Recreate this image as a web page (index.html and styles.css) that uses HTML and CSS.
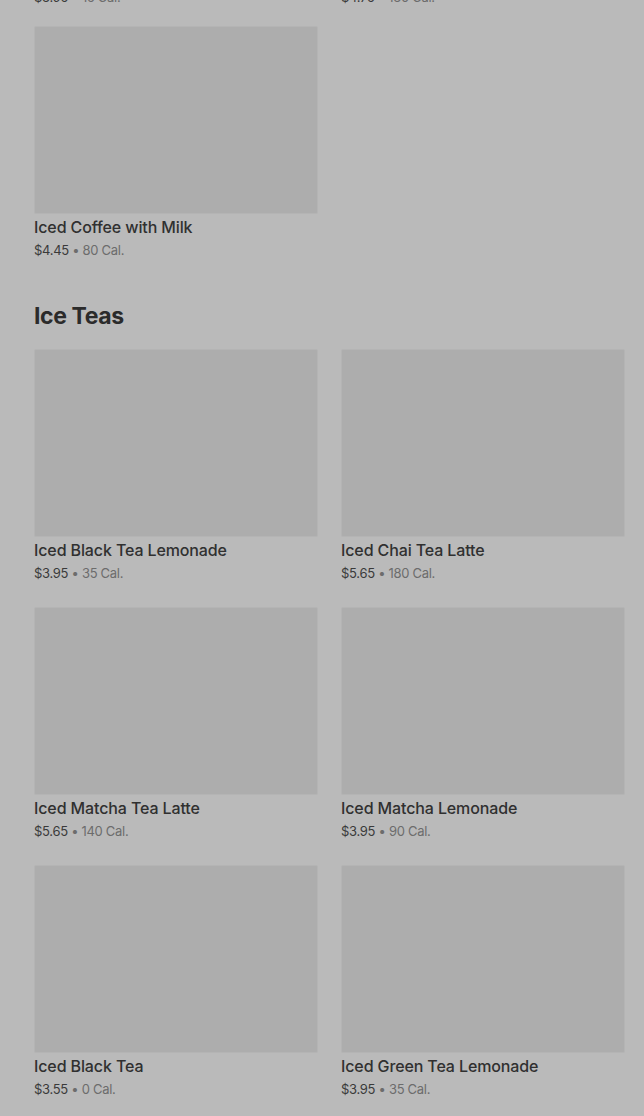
FILE: index.html
```html
<!DOCTYPE html>
<html>
<head>
  <title>Menu</title>
  <link rel="stylesheet" href="styles.css">
</head>
<body>
  <div class="menu">
    <section class="section section-first">
      <div class="grid">
        <div class="item">
          <div class="thumb"></div>
          <div class="name">Iced Caffè Americano</div>
          <div class="meta"><span class="price">$3.95</span> • 15 Cal.</div>
        </div>
        <div class="item">
          <div class="thumb"></div>
          <div class="name">Iced Caffè Latte</div>
          <div class="meta"><span class="price">$4.75</span> • 130 Cal.</div>
        </div>
        <div class="item">
          <div class="thumb"></div>
          <div class="name">Iced Coffee with Milk</div>
          <div class="meta"><span class="price">$4.45</span> • 80 Cal.</div>
        </div>
      </div>
    </section>

    <section class="section">
      <h2 class="section-title">Ice Teas</h2>
      <div class="grid">
        <div class="item">
          <div class="thumb"></div>
          <div class="name">Iced Black Tea Lemonade</div>
          <div class="meta"><span class="price">$3.95</span> • 35 Cal.</div>
        </div>
        <div class="item">
          <div class="thumb"></div>
          <div class="name">Iced Chai Tea Latte</div>
          <div class="meta"><span class="price">$5.65</span> • 180 Cal.</div>
        </div>
        <div class="item">
          <div class="thumb"></div>
          <div class="name">Iced Matcha Tea Latte</div>
          <div class="meta"><span class="price">$5.65</span> • 140 Cal.</div>
        </div>
        <div class="item">
          <div class="thumb"></div>
          <div class="name">Iced Matcha Lemonade</div>
          <div class="meta"><span class="price">$3.95</span> • 90 Cal.</div>
        </div>
        <div class="item">
          <div class="thumb"></div>
          <div class="name">Iced Black Tea</div>
          <div class="meta"><span class="price">$3.55</span> • 0 Cal.</div>
        </div>
        <div class="item">
          <div class="thumb"></div>
          <div class="name">Iced Green Tea Lemonade</div>
          <div class="meta"><span class="price">$3.95</span> • 35 Cal.</div>
        </div>
      </div>
    </section>
  </div>
</body>
</html>
```

FILE: styles.css
```css
html, body {
  margin: 0;
  background: #bababa;
  font-family: Inter, "Noto Sans", sans-serif;
}

/* page is scrolled: the previous row sits above the top edge */
.menu {
  margin-top: -227px;
  padding: 0 20px 0 34px;
}

.section + .section { margin-top: 43px; }
.section-first .grid { row-gap: 20px; }

.section-title {
  margin: 0 0 19px;
  font-size: 23px;
  line-height: 28px;
  font-weight: 700;
  letter-spacing: -0.4px;
  color: #2b2b2b;
}

.grid {
  display: grid;
  grid-template-columns: 284px 284px;
  column-gap: 23px;
  row-gap: 25px;
}

.thumb {
  height: 186px;
  background: #adadad;
  border: 1px solid #b4b4b4;
  border-radius: 2px;
}

.name {
  margin-top: 3px;
  font-size: 16px;
  line-height: 20px;
  font-weight: 500;
  letter-spacing: -0.12px;
  color: #303030;
}

.meta {
  margin-top: 4px;
  font-size: 13px;
  line-height: 18px;
  letter-spacing: -0.3px;
  color: #6c6c6c;
}

.price { color: #3a3a3a; }
```
